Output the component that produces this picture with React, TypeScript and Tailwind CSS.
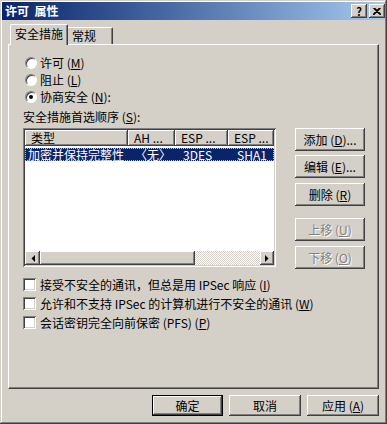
import type React from 'react';

// Win2000 style bevels
const raised =
  'bg-[#d4d0c8] shadow-[inset_-1px_-1px_0_#404040,inset_1px_1px_0_#ffffff,inset_-2px_-2px_0_#808080,inset_2px_2px_0_#d4d0c8]';
const sunken =
  'shadow-[inset_1px_1px_0_#808080,inset_-1px_-1px_0_#ffffff,inset_2px_2px_0_#404040,inset_-2px_-2px_0_#d4d0c8]';

const Key: React.FC<{ k: string }> = ({ k }) => (
  <>
    (<span className="underline underline-offset-1">{k}</span>)
  </>
);

const Radio: React.FC<{ checked?: boolean; children: React.ReactNode }> = ({ checked, children }) => (
  <div className="flex items-center h-[17px] pl-[2px]">
    <div className="w-[12px] h-[12px] rounded-full bg-white border border-[#808080] border-r-white border-b-white shadow-[inset_1px_1px_0_#404040] flex items-center justify-center">
      {checked && <div className="w-[4px] h-[4px] rounded-full bg-black" />}
    </div>
    <span className="ml-[3px]">{children}</span>
  </div>
);

const Check: React.FC<{ children: React.ReactNode }> = ({ children }) => (
  <div className="flex items-center h-[19px]">
    <div className={`w-[13px] h-[13px] bg-white ${sunken}`} />
    <span className="ml-[4px]">{children}</span>
  </div>
);

const SideButton: React.FC<{ disabled?: boolean; className?: string; children: React.ReactNode }> = ({
  disabled,
  className,
  children,
}) => (
  <div
    className={`${raised} h-[23px] w-[70px] flex items-center justify-center ${
      disabled ? 'text-[#808080] [text-shadow:1px_1px_0_#ffffff]' : ''
    } ${className ?? ''}`}
  >
    {children}
  </div>
);

const Arrow: React.FC<{ dir: 'left' | 'right' }> = ({ dir }) => (
  <svg width="4" height="7" viewBox="0 0 4 7">
    {dir === 'left' ? <polygon points="4,0 4,7 0.5,3.5" fill="#000" /> : <polygon points="0,0 0,7 3.5,3.5" fill="#000" />}
  </svg>
);

const headerCell =
  'h-full flex items-center shrink-0 pl-[6px] bg-[#d4d0c8] shadow-[inset_-1px_-1px_0_#404040,inset_1px_1px_0_#ffffff,inset_-2px_-2px_0_#808080]';

export default function App() {
  return (
    <div className="w-[387px] h-[424px] bg-[#d4d0c8] p-[2px] flex flex-col font-['Noto_Sans_CJK_SC','Liberation_Sans',sans-serif] text-[12px] leading-none text-black shadow-[inset_-1px_-1px_0_#404040,inset_1px_1px_0_#d4d0c8,inset_-2px_-2px_0_#808080,inset_2px_2px_0_#ffffff] overflow-hidden">
      {/* Title bar */}
      <div className="h-[18px] flex items-center justify-between pl-[3px] pr-[0px] bg-linear-to-r from-[#0a246a] to-[#a6caf0]">
        <span className="text-white font-bold">许可&nbsp;&nbsp;属性</span>
        <div className="flex gap-[2px]">
          <div className={`${raised} w-[16px] h-[14px] flex items-center justify-center font-bold text-[11px]`}>?</div>
          <div className={`${raised} w-[16px] h-[14px] flex items-center justify-center`}>
            <svg width="8" height="7" viewBox="0 0 8 7">
              <path d="M0.5 0 L7.5 7 M1.5 0 L8 6.5 M7.5 0 L0.5 7 M6.5 0 L0 6.5" stroke="#000" strokeWidth="1.1" />
            </svg>
          </div>
        </div>
      </div>

      <div className="flex-1 pl-[6px] pr-[6px] pt-[4px] flex flex-col">
        {/* Tabs */}
        <div className="flex items-end h-[20px] ml-[2px]">
          <div className="relative z-10 h-[21px] -mb-[1px] w-[58px] bg-[#d4d0c8] border-t border-l border-white border-r border-r-[#404040] shadow-[inset_-1px_0_0_#808080] rounded-t-[2px] flex items-center justify-center pb-[2px]">
            安全措施
          </div>
          <div className="h-[17px] w-[45px] border-t border-white border-r border-r-[#404040] shadow-[inset_-1px_0_0_#808080] rounded-tr-[2px] flex items-center pl-[4px]">
            常规
          </div>
        </div>

        {/* Panel */}
        <div className="h-[345px] border border-white border-r-[#404040] border-b-[#404040] shadow-[inset_-1px_-1px_0_#808080] pt-[9px] pl-[14px] flex flex-col">
          <Radio>
            许可 <Key k="M" />
          </Radio>
          <Radio>
            阻止 <Key k="L" />
          </Radio>
          <Radio checked>
            协商安全 <Key k="N" />:
          </Radio>

          <div className="mt-[5px] h-[14px] flex items-center">
            安全措施首选顺序 <Key k="S" />:
          </div>

          <div className="mt-[4px] flex">
            {/* List view */}
            <div className={`w-[253px] h-[139px] bg-white p-[2px] flex flex-col ${sunken}`}>
              <div className="flex h-[16px] overflow-hidden">
                <div className={`${headerCell} w-[103px]`}>类型</div>
                <div className={`${headerCell} w-[47px]`}>AH ...</div>
                <div className={`${headerCell} w-[53px]`}>ESP ...</div>
                <div className={`${headerCell} w-[46px]`}>ESP ...</div>
              </div>
              <div className="mt-[2px] h-[13px] flex bg-[#0a246a] text-white outline-1 outline-dotted outline-[#c0c0c0] -outline-offset-1">
                <div className="w-[103px] pl-[3px] flex items-center">加密并保持完整性</div>
                <div className="w-[47px] pl-[7px] flex items-center">〈无〉</div>
                <div className="w-[53px] pl-[8px] flex items-center">3DES</div>
                <div className="w-[46px] pl-[9px] flex items-center">SHA1</div>
              </div>
              <div className="flex-1" />
              {/* Horizontal scrollbar */}
              <div className="flex h-[14px]">
                <div className={`${raised} w-[15px] h-full flex items-center justify-center`}>
                  <Arrow dir="left" />
                </div>
                <div className={`${raised} w-[155px] h-full`} />
                <div className="flex-1 h-full bg-[image:repeating-conic-gradient(#ffffff_0_25%,#d4d0c8_0_50%)] bg-[length:2px_2px]" />
                <div className={`${raised} w-[14px] h-full flex items-center justify-center`}>
                  <Arrow dir="right" />
                </div>
              </div>
            </div>

            {/* Side buttons */}
            <div className="ml-[19px] flex flex-col">
              <SideButton>
                添加 <Key k="D" />...
              </SideButton>
              <SideButton className="mt-[4px]">
                编辑 <Key k="E" />...
              </SideButton>
              <SideButton className="mt-[5px]">
                删除 <Key k="R" />
              </SideButton>
              <SideButton disabled className="mt-[12px]">
                上移 <Key k="U" />
              </SideButton>
              <SideButton disabled className="mt-[5px]">
                下移 <Key k="O" />
              </SideButton>
            </div>
          </div>

          <div className="mt-[6px] flex flex-col">
            <Check>
              接受不安全的通讯，但总是用 IPSec 响应 <Key k="I" />
            </Check>
            <Check>
              允许和不支持 IPSec 的计算机进行不安全的通讯 <Key k="W" />
            </Check>
            <Check>
              会话密钥完全向前保密 (PFS) <Key k="P" />
            </Check>
          </div>
        </div>

        {/* Dialog buttons */}
        <div className="mt-[6px] flex justify-end gap-[6px]">
          <div className="w-[71px] h-[21px] border border-black">
            <div className={`${raised} w-full h-full flex items-center justify-center`}>确定</div>
          </div>
          <div className={`${raised} w-[72px] h-[21px] flex items-center justify-center`}>取消</div>
          <div className={`${raised} w-[72px] h-[21px] flex items-center justify-center`}>
            应用 <Key k="A" />
          </div>
        </div>
      </div>
    </div>
  );
}
